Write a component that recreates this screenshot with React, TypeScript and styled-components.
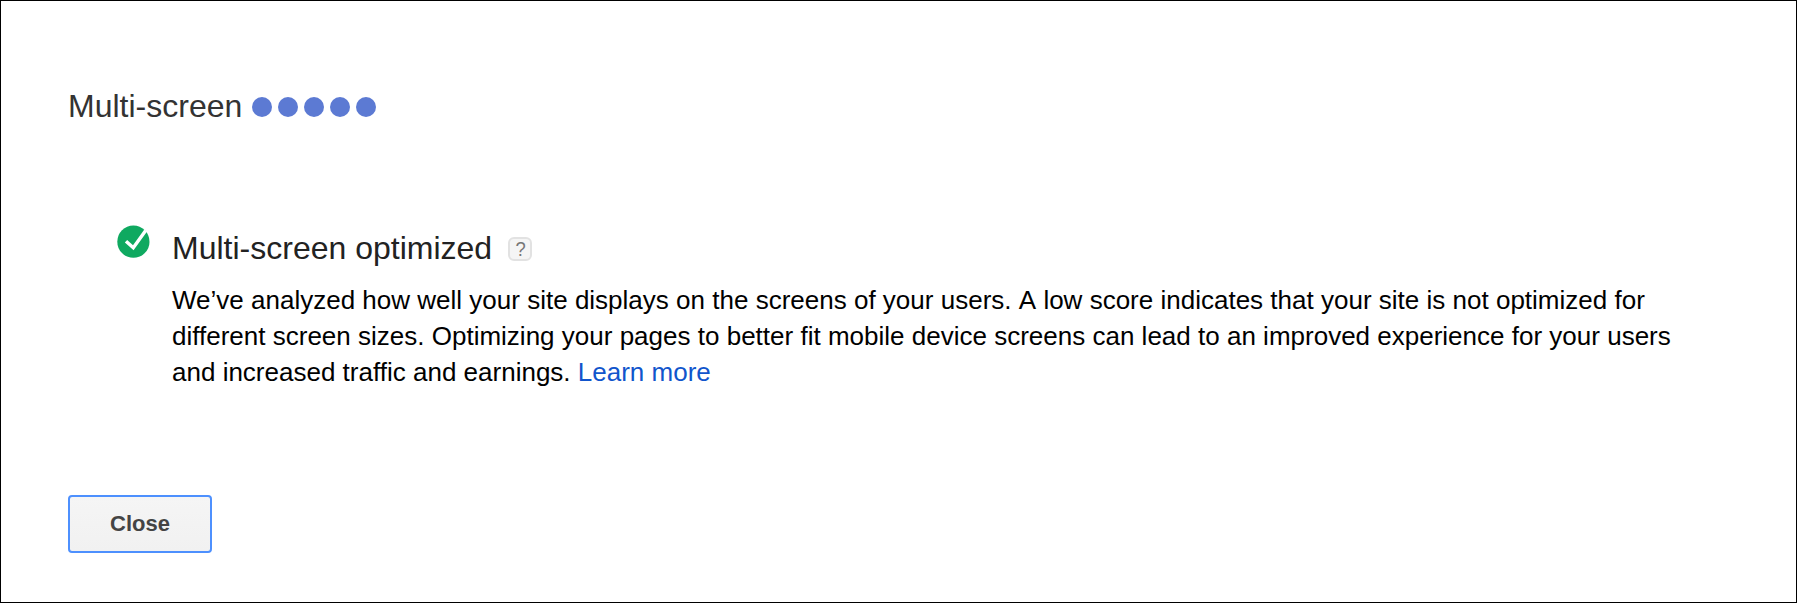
import React from "react";
import styled, { createGlobalStyle } from "styled-components";

const GlobalStyle = createGlobalStyle`
  *, *::before, *::after { box-sizing: border-box; }
  body {
    margin: 0;
    background: #fff;
    font-family: "Liberation Sans", Arial, sans-serif;
  }
`;

const Dialog = styled.main`
  display: flex;
  flex-direction: column;
  align-items: flex-start;
  width: 100%;
  height: 603px;
  padding: 87px 67px 0;
  border: 1px solid #000;
  background: #fff;
`;

const Header = styled.header`
  display: flex;
  align-items: center;
  height: 36px;
`;

const Title = styled.h1`
  width: 184px;
  margin: 0;
  color: #333;
  font-size: 32px;
  font-weight: 400;
  line-height: 36px;
  white-space: nowrap;
`;

const Score = styled.div`
  display: flex;
  gap: 6px;
  padding-top: 2px;
`;

const Dot = styled.span`
  width: 20px;
  height: 20px;
  border-radius: 50%;
  background: #5c7ad3;
`;

const Result = styled.section`
  display: flex;
  align-items: flex-start;
  margin: 101px 0 0 49px;
`;

const CheckIcon = styled.svg`
  flex: none;
  width: 33px;
  height: 33px;
  margin-right: 22px;
`;

const Details = styled.div`
  width: 1510px;
  padding-top: 5px;
`;

const Heading = styled.div`
  display: flex;
  align-items: center;
  gap: 16px;
`;

const Subtitle = styled.h2`
  margin: 0;
  color: #222;
  font-size: 32px;
  font-weight: 400;
  line-height: 36px;
`;

const Help = styled.span`
  display: flex;
  align-items: center;
  justify-content: center;
  width: 24px;
  height: 24px;
  margin-top: 2px;
  border: 2px solid #e2e2e2;
  border-radius: 6px;
  background: #f5f5f5;
`;

const HelpMark = styled.span`
  color: #777;
  font-size: 20px;
  line-height: 20px;
  transform: scaleX(0.92);
`;

const Description = styled.p`
  margin: 16px 0 0;
  color: #000;
  font-size: 26px;
  line-height: 36px;
  word-spacing: 0.03px;
`;

/* Keeps the spaces around a capital at their full width, without kerning. */
const Unkerned = styled.span`
  display: inline-block;
`;

const Link = styled.a`
  color: #15c;
  text-decoration: none;
`;

const CloseButton = styled.button`
  width: 144px;
  height: 58px;
  margin-top: 105px;
  padding: 0;
  border: 2px solid #4d90fe;
  border-radius: 4px;
  background: linear-gradient(#f5f5f5, #f1f1f1);
  color: #444;
  font: bold 22px/54px "Liberation Sans", Arial, sans-serif;
`;

export default function App() {
  return (
    <>
      <GlobalStyle />
      <Dialog>
        <Header>
          <Title>Multi-screen</Title>
          <Score role="img" aria-label="5 out of 5">
            {[1, 2, 3, 4, 5].map((n) => (
              <Dot key={n} />
            ))}
          </Score>
        </Header>
        <Result>
          <CheckIcon viewBox="0 0 33 33" aria-hidden="true">
            <circle cx="16.4" cy="16.7" r="16.1" fill="#0fa960" />
            <path d="M9 16.2L16.3 22.8L28.7 5.6" fill="none" stroke="#fff" strokeWidth="3.4" />
          </CheckIcon>
          <Details>
            <Heading>
              <Subtitle>Multi-screen optimized</Subtitle>
              <Help>
                <HelpMark>?</HelpMark>
              </Help>
            </Heading>
            <Description>
              We’ve analyzed how well your site displays on the screens of your users.{" "}
              <Unkerned>A</Unkerned> low score indicates that your site is not optimized for
              different screen sizes. Optimizing your pages to better fit mobile device screens can
              lead to an improved experience for your users and increased traffic and earnings.{" "}
              <Link href="#">Learn more</Link>
            </Description>
          </Details>
        </Result>
        <CloseButton type="button">Close</CloseButton>
      </Dialog>
    </>
  );
}
